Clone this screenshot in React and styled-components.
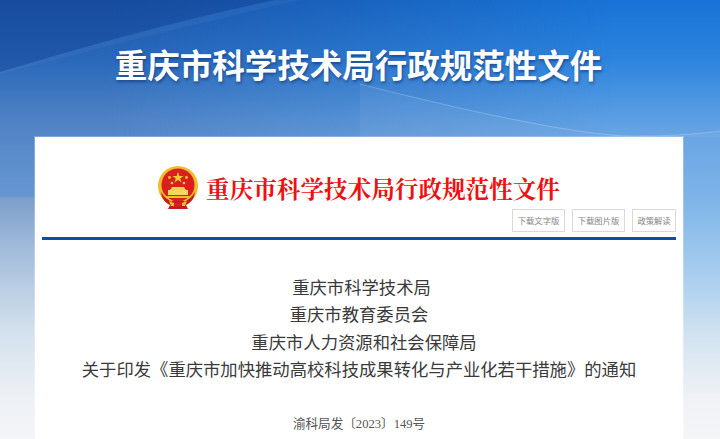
import React from "react";
import styled, { createGlobalStyle } from "styled-components";

const Global = createGlobalStyle`
  html, body { margin: 0; padding: 0; height: 100%; overflow: hidden; }
  body { font-family: "Microsoft YaHei", "Noto Sans CJK SC", "Liberation Sans", sans-serif; }
`;

const Page = styled.div`
  position: relative;
  width: 720px;
  height: 439px;
  overflow: hidden;
  background: linear-gradient(180deg, #1873d6 0px, #2d84de 60px, #5c9fe3 120px, #6aa5e3 137px, #7eb4e8 200px, #a5ccee 270px, #d5e4f1 340px, #f0f2f5 400px, #f4f5f7 439px);

  &::before {
    content: "";
    position: absolute;
    inset: 0;
    background: linear-gradient(180deg, #1b54a8 0px, #2a68ba 60px, #4f82c4 120px, #6796d2 196px, #7c9ec9 198px, #a3bcdb 250px, #d3e0ec 330px, #eef1f5 400px, #f4f5f8 439px);
    -webkit-mask-image: linear-gradient(90deg, #000 0%, #000 15%, transparent 85%);
    mask-image: linear-gradient(90deg, #000 0%, #000 15%, transparent 85%);
  }
`;

const Swoosh = styled.svg`
  position: absolute;
  inset: 0;
  width: 720px;
  height: 439px;
`;

const Banner = styled.header`
  position: relative;
  height: 137px;
  display: flex;
  justify-content: center;
  padding: 41px 3px 0 0;
  box-sizing: border-box;
`;

const BannerTitle = styled.h1`
  margin: 0;
  height: 46px;
  color: #fff;
  font-size: 32.5px;
  line-height: 46px;
  font-weight: 700;
  white-space: nowrap;
  text-shadow: 1px 2px 3px rgba(10, 40, 100, 0.55);
`;

const Card = styled.main`
  position: relative;
  width: 648px;
  margin-left: 35px;
  height: 302px;
  background: #fff;
  box-sizing: border-box;
  padding: 29px 7px 0;
  overflow: hidden;
  box-shadow: 0 0 0 1px rgba(255, 255, 255, 0.25);
`;

const Masthead = styled.div`
  display: flex;
  justify-content: center;
  align-items: center;
  gap: 8px;
  height: 43px;
`;

const RedTitle = styled.div`
  color: #ee1111;
  font-family: "Noto Serif CJK SC", "Noto Sans CJK SC", serif;
  font-size: 23.6px;
  font-weight: 700;
  line-height: 30px;
  white-space: nowrap;
`;

const Actions = styled.div`
  display: flex;
  justify-content: flex-end;
  gap: 7px;
`;

const ActionButton = styled.div`
  width: ${(p) => p.$w}px;
  height: 23px;
  box-sizing: border-box;
  border: 1px solid #d9d9d9;
  color: #858585;
  font-size: 8.3px;
  line-height: 21px;
  text-align: center;
  white-space: nowrap;
  background: #fff;
`;

const Rule = styled.div`
  height: 3px;
  background: #0b4f9e;
  margin-top: 5px;
`;

const Heading = styled.div`
  margin-top: 33px;
  color: #3a3a3a;
  font-size: 17.33px;
  line-height: 27.3px;
`;

const HeadingLine = styled.div`
  text-align: center;
  white-space: nowrap;
  padding-left: ${(p) => p.$shift || 0}px;
`;

const DocNumber = styled.div`
  margin-top: 32px;
  text-align: center;
  color: #555;
  font-family: "Liberation Serif", "Noto Sans CJK SC", serif;
  font-size: 12.6px;
  line-height: 20px;
  white-space: nowrap;
`;

const Emblem = () => (
  <svg width="40" height="43" viewBox="0 0 40 43">
    <circle cx="20" cy="20" r="20" fill="#f0bd2c" />
    <circle cx="20" cy="19" r="16.5" fill="#d8201f" />
    <polygon points="20,6 21.4,10 25.6,10 22.2,12.5 23.5,16.5 20,14.1 16.5,16.5 17.8,12.5 14.4,10 18.6,10" fill="#f6c930" />
    <circle cx="11.5" cy="11.5" r="1.4" fill="#f6c930" />
    <circle cx="28.5" cy="11.5" r="1.4" fill="#f6c930" />
    <circle cx="14" cy="17" r="1.3" fill="#f6c930" />
    <circle cx="26" cy="17" r="1.3" fill="#f6c930" />
    <path d="M14 21h12l2 3H12z" fill="#f6d050" />
    <path d="M10 24h20v5H10z" fill="#f4d664" />
    <path d="M7 30h26v2H7z" fill="#f0bd2c" />
    <path d="M3 26c1 8 5 11 9 13l-2 4h20l-2-4c4-2 8-5 9-13-3 5-7 8-11 9H14C10 34 6 31 3 26z" fill="#c91a1f" />
    <path d="M11 35c6 3 12 3 18 0l-2 5H13z" fill="#f0bd2c" />
    <path d="M6 29c3 3 5 5 8 6M34 29c-3 3-5 5-8 6" stroke="#f0bd2c" strokeWidth="1.4" fill="none" />
    <path d="M16 37h8v3h-8z" fill="#d8201f" />
  </svg>
);

export default function App() {
  return (
    <Page>
      <Global />
      <Swoosh viewBox="0 0 720 439">
        <path d="M0 72C100 42 190 18 275 0H0Z" fill="#123c8c" opacity="0.35" />
        <path d="M0 72C100 42 190 18 275 0H300C200 22 100 48 0 74Z" fill="#fff" opacity="0.04" />
        <path d="M360 84C470 112 590 138 640 136C670 136 700 134 720 131V137H360Z" fill="#fff" opacity="0.05" />
        <path d="M360 84C470 112 590 138 640 136C670 136 700 134 720 131" fill="none" stroke="#fff" strokeWidth="1" opacity="0.22" />
      </Swoosh>
      <Banner>
        <BannerTitle>重庆市科学技术局行政规范性文件</BannerTitle>
      </Banner>
      <Card>
        <Masthead>
          <Emblem />
          <RedTitle>重庆市科学技术局行政规范性文件</RedTitle>
        </Masthead>
        <Actions>
          <ActionButton $w={53}>下载文字版</ActionButton>
          <ActionButton $w={53}>下载图片版</ActionButton>
          <ActionButton $w={44}>政策解读</ActionButton>
        </Actions>
        <Rule />
        <Heading>
          <HeadingLine $shift={5}>重庆市科学技术局</HeadingLine>
          <HeadingLine>重庆市教育委员会</HeadingLine>
          <HeadingLine $shift={10}>重庆市人力资源和社会保障局</HeadingLine>
          <HeadingLine>关于印发《重庆市加快推动高校科技成果转化与产业化若干措施》的通知</HeadingLine>
        </Heading>
        <DocNumber>渝科局发〔2023〕149号</DocNumber>
      </Card>
    </Page>
  );
}
